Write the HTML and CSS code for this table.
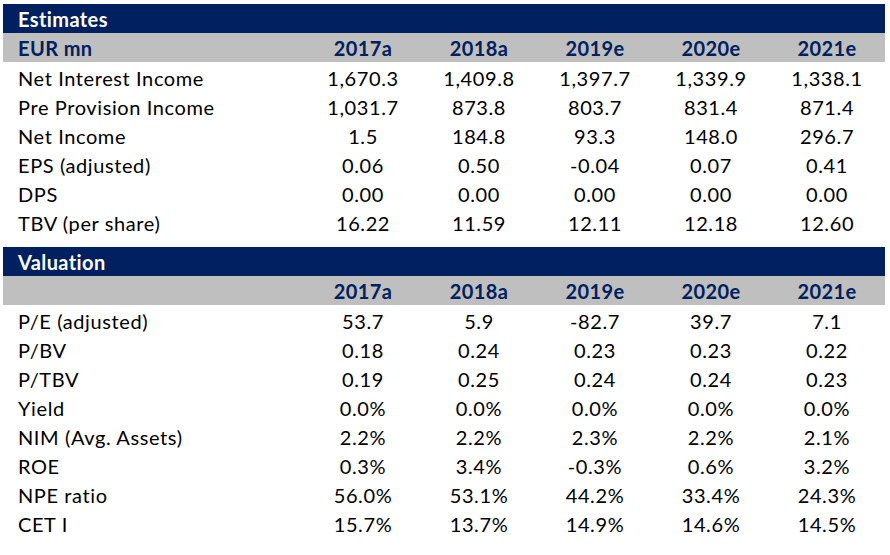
FILE: index.html
```html
<!DOCTYPE html>
<html>
<head>
<meta charset="utf-8">
<link rel="stylesheet" href="styles.css">
</head>
<body>
<div class="wrap">
  <table class="fin">
    <colgroup>
      <col class="c-label"><col class="c-num"><col class="c-num"><col class="c-num"><col class="c-num"><col class="c-num">
    </colgroup>
    <tr class="band"><td colspan="6">Estimates</td></tr>
    <tr class="head"><td>EUR mn</td><td>2017a</td><td>2018a</td><td>2019e</td><td>2020e</td><td>2021e</td></tr>
    <tr><td>Net Interest Income</td><td>1,670.3</td><td>1,409.8</td><td>1,397.7</td><td>1,339.9</td><td>1,338.1</td></tr>
    <tr><td>Pre Provision Income</td><td>1,031.7</td><td>873.8</td><td>803.7</td><td>831.4</td><td>871.4</td></tr>
    <tr><td>Net Income</td><td>1.5</td><td>184.8</td><td>93.3</td><td>148.0</td><td>296.7</td></tr>
    <tr><td>EPS (adjusted)</td><td>0.06</td><td>0.50</td><td>-0.04</td><td>0.07</td><td>0.41</td></tr>
    <tr><td>DPS</td><td>0.00</td><td>0.00</td><td>0.00</td><td>0.00</td><td>0.00</td></tr>
    <tr><td>TBV (per share)</td><td>16.22</td><td>11.59</td><td>12.11</td><td>12.18</td><td>12.60</td></tr>
  </table>
  <table class="fin second">
    <colgroup>
      <col class="c-label"><col class="c-num"><col class="c-num"><col class="c-num"><col class="c-num"><col class="c-num">
    </colgroup>
    <tr class="band"><td colspan="6">Valuation</td></tr>
    <tr class="head"><td></td><td>2017a</td><td>2018a</td><td>2019e</td><td>2020e</td><td>2021e</td></tr>
    <tr><td>P/E (adjusted)</td><td>53.7</td><td>5.9</td><td>-82.7</td><td>39.7</td><td>7.1</td></tr>
    <tr><td>P/BV</td><td>0.18</td><td>0.24</td><td>0.23</td><td>0.23</td><td>0.22</td></tr>
    <tr><td>P/TBV</td><td>0.19</td><td>0.25</td><td>0.24</td><td>0.24</td><td>0.23</td></tr>
    <tr><td>Yield</td><td>0.0%</td><td>0.0%</td><td>0.0%</td><td>0.0%</td><td>0.0%</td></tr>
    <tr><td>NIM (Avg. Assets)</td><td>2.2%</td><td>2.2%</td><td>2.3%</td><td>2.2%</td><td>2.1%</td></tr>
    <tr><td>ROE</td><td>0.3%</td><td>3.4%</td><td>-0.3%</td><td>0.6%</td><td>3.2%</td></tr>
    <tr><td>NPE ratio</td><td>56.0%</td><td>53.1%</td><td>44.2%</td><td>33.4%</td><td>24.3%</td></tr>
    <tr><td>CET I</td><td>15.7%</td><td>13.7%</td><td>14.9%</td><td>14.6%</td><td>14.5%</td></tr>
  </table>
</div>
</body>
</html>
```

FILE: styles.css
```css
html, body {
  margin: 0;
  padding: 0;
  background: #ffffff;
}
.wrap {
  padding: 4px 0 0 3px;
  width: 882px;
  display: flex;
  flex-direction: column;
  gap: 11px;
}
.fin {
  border-collapse: collapse;
  table-layout: fixed;
  width: 882px;
  font-family: Lato, "Open Sans", sans-serif;
  font-size: 20px;
  letter-spacing: 0.6px;
  color: #000000;
}
.c-label { width: 302px; }
.c-num { width: 116px; }
.fin tr {
  height: 29px;
}
.fin td {
  padding: 3px 0 0 0;
  height: 26px;
  line-height: 26px;
  text-align: center;
  white-space: nowrap;
}
.fin td:first-child {
  text-align: left;
  padding-left: 15px;
}
.band td,
.head td {
  padding-top: 1px;
  height: 28px;
  line-height: 28px;
  font-weight: bold;
  letter-spacing: 0.4px;
}
.band td {
  background: #002060;
  color: #ffffff;
}
.head td {
  background: #bfbfbf;
  color: #002060;
}
```
